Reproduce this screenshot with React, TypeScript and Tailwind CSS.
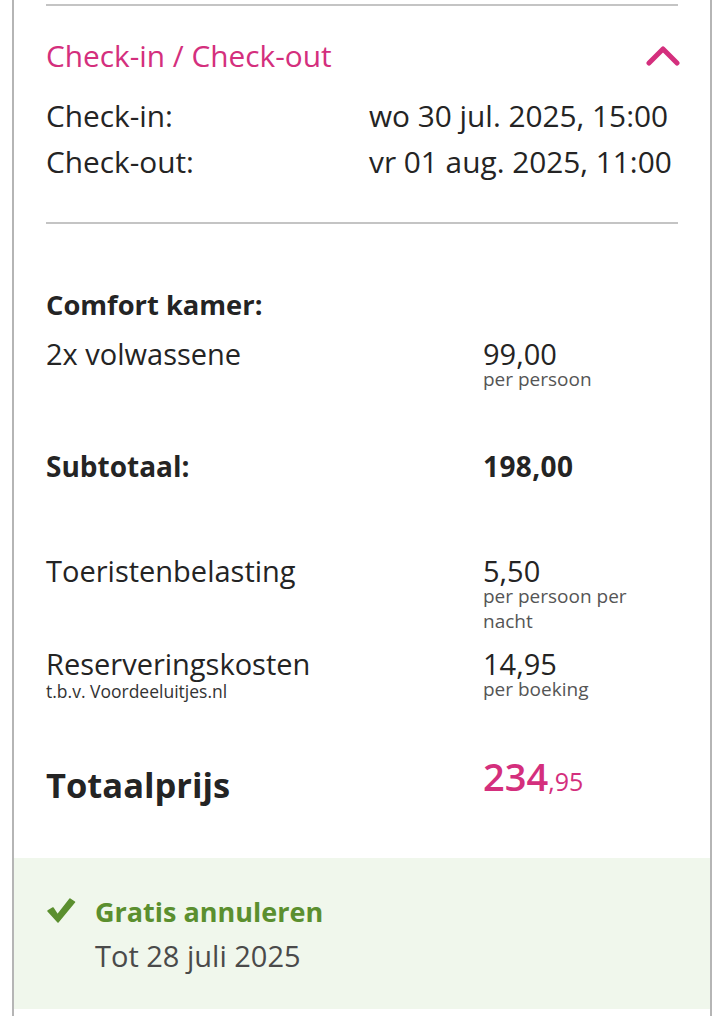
function Row({
  label,
  labelSub,
  value,
  subs,
  bold,
  className = "",
}: {
  label: string;
  labelSub?: string;
  value?: string;
  subs?: string[];
  bold?: boolean;
  className?: string;
}) {
  return (
    <div className={`flex ${className}`}>
      <div className="w-[437px] shrink-0">
        <div className={bold ? "text-[28px] font-bold leading-[27px]" : "text-[29px] leading-[27px]"}>{label}</div>
        {labelSub && <div className="text-[17.5px] leading-[29px] text-[#333]">{labelSub}</div>}
      </div>
      <div className="flex-1">
        {value && (
          <div className={bold ? "text-[28px] font-bold leading-[27px] tracking-[0.4px]" : "text-[29px] leading-[27px]"}>{value}</div>
        )}
        {subs && (
          <div className="w-[165px] text-[19px] leading-[25px] text-[#555]">
            {subs.map((s) => (
              <div key={s}>{s}</div>
            ))}
          </div>
        )}
      </div>
    </div>
  );
}

export default function App() {
  return (
    <div className="w-[718px] h-[1016px] overflow-hidden bg-white text-[#242424]" style={{ fontFamily: '"Open Sans", "Noto Sans", sans-serif' }}>
      <div className="ml-[12px] w-[700px] h-[1016px] border-x-2 border-[#b5b5b5] flex flex-col">
        <div className="px-8">
          <div className="mt-[4px] h-[2px] bg-[#c4c4c4]" />
          <div className="mt-[32px] h-[36px] flex items-center justify-between">
            <div className="text-[29.8px] text-[#d42f7d] leading-[36px]">Check-in / Check-out</div>
            <svg width="34" height="22" viewBox="0 0 34 22" className="mr-[-2px]">
              <polyline points="3,18 17,4 31,18" fill="none" stroke="#d42f7d" strokeWidth="5" strokeLinecap="round" strokeLinejoin="round" />
            </svg>
          </div>
          <div className="mt-[19px] grid grid-cols-[323px_1fr] text-[29.8px] leading-[46px]">
            <div>Check-in:</div>
            <div>wo 30 jul. 2025, 15:00</div>
            <div>Check-out:</div>
            <div>vr 01 aug. 2025, 11:00</div>
          </div>
          <div className="mt-[37px] h-[2px] bg-[#c4c4c4]" />

          <div className="mt-[67px] text-[27.3px] font-bold leading-[27px]">Comfort kamer:</div>
          <Row className="mt-[22px]" label="2x volwassene" value="99,00" subs={["per persoon"]} />
          <Row className="mt-[61px]" label="Subtotaal:" value="198,00" bold />
          <Row className="mt-[77px]" label="Toeristenbelasting" value="5,50" subs={["per persoon per", "nacht"]} />
          <Row className="mt-[16px]" label="Reserveringskosten" labelSub="t.b.v. Voordeeluitjes.nl" value="14,95" subs={["per boeking"]} />

          <div className="mt-[54px] flex items-end h-[50px]">
            <div className="w-[437px] text-[34.5px] font-bold leading-[50px]">Totaalprijs</div>
            <div className="text-[#d42f7d] font-semibold leading-[50px]">
              <span className="text-[38px]">234</span>
              <span className="text-[25px] font-normal">,95</span>
            </div>
          </div>
        </div>

        <div className="mt-[48px] h-[151px] bg-[#f0f7ec] pl-8 pt-[32px]">
          <div className="flex items-center h-[44px]">
            <svg width="30" height="26" viewBox="0 0 30 26" className="mr-[19px] -mt-[4px]">
              <path d="M2 14 L7 11 L11.5 18 L24 2 L28.5 5 L12 25 Z" fill="#5b8f2f" stroke="#5b8f2f" strokeWidth="1.5" strokeLinejoin="round" />
            </svg>
            <div className="text-[27px] font-bold text-[#5b8f2f] leading-[44px]">Gratis annuleren</div>
          </div>
          <div className="pl-[49px] text-[29px] leading-[44px] text-[#4a4a4a]">Tot 28 juli 2025</div>
        </div>
      </div>
    </div>
  );
}
